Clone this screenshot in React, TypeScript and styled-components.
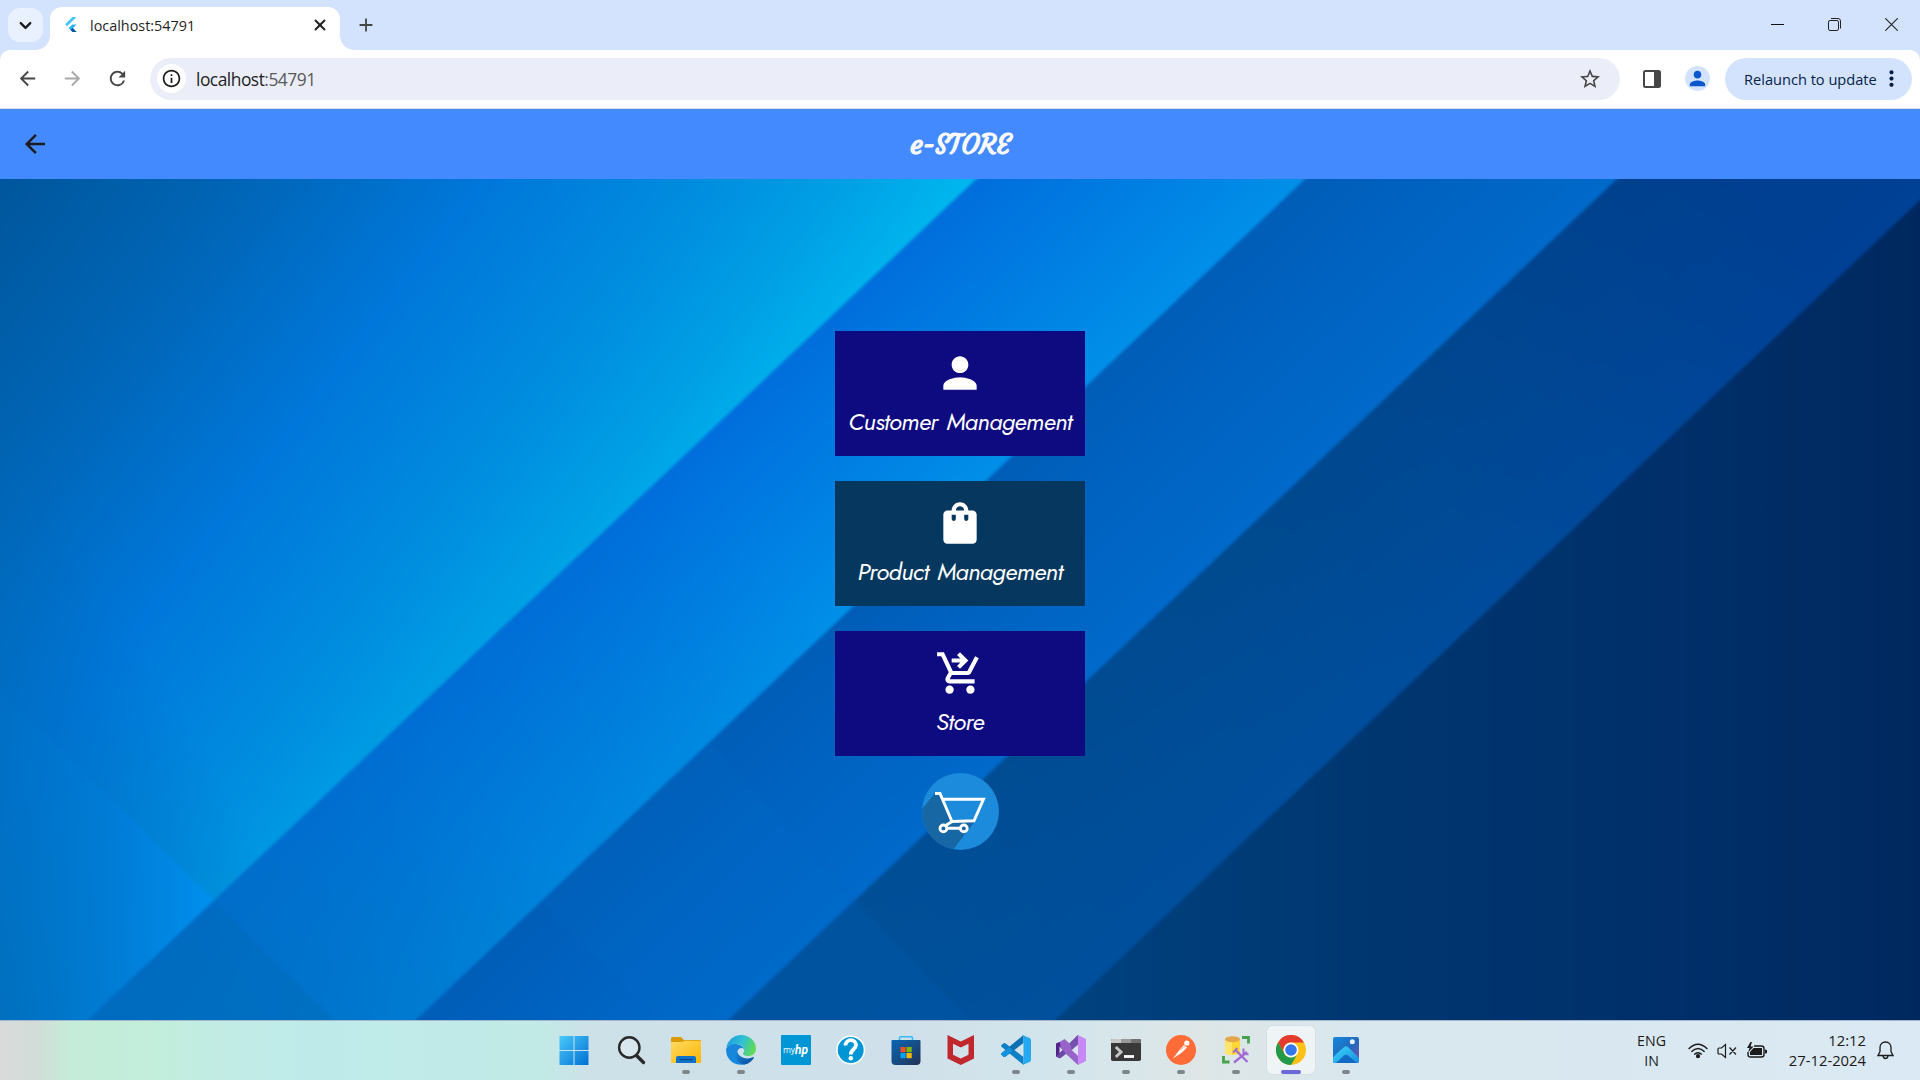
import React from "react";
import styled, { createGlobalStyle } from "styled-components";
import { ChevronDown, X } from "lucide-react";
import {
  MdArrowBack,
  MdArrowForward,
  MdRefresh,
  MdInfoOutline,
  MdStarBorder,
  MdPerson,
  MdShoppingBag,
  MdShoppingCartCheckout,
  MdAdd,
  MdMoreVert,
} from "react-icons/md";

const GlobalStyle = createGlobalStyle`
  * { box-sizing: border-box; }
  body { margin: 0; overflow: hidden; font-family: "Open Sans", "Noto Sans", sans-serif; }
  svg { display: block; flex: none; }
`;

const Screen = styled.div`
  display: grid;
  grid-template-rows: 50px 59px 70px 841px 60px;
  width: 1920px;
  height: 1080px;
  overflow: hidden;
`;

/* ---------- browser chrome ---------- */

const TabStrip = styled.header`
  display: flex;
  background: #d3e3fd;
  color: #1f1f1f;
`;

const TabSearch = styled.div`
  display: grid;
  place-items: center;
  width: 35px;
  height: 34px;
  margin: 8px 7px 0 8px;
  border-radius: 12px;
  background: #eaf1fe;
`;

const Tab = styled.div`
  position: relative;
  display: flex;
  align-items: center;
  width: 290px;
  height: 43px;
  margin-top: 7px;
  padding: 0 11px 7px 14px;
  border-radius: 12px 12px 0 0;
  background: #fff;

  &::before,
  &::after {
    content: "";
    position: absolute;
    bottom: 0;
    width: 14px;
    height: 14px;
  }
  &::before {
    left: -14px;
    background: radial-gradient(circle at 0 0, transparent 13.5px, #fff 14px);
  }
  &::after {
    right: -14px;
    background: radial-gradient(circle at 100% 0, transparent 13.5px, #fff 14px);
  }
`;

const TabTitle = styled.span`
  flex: 1;
  margin-left: 10px;
  padding-top: 1px;
  font-size: 14.4px;
  line-height: 20px;
`;

const NewTab = styled.div`
  margin: 14px 0 0 15px;
  color: #444746;
`;

const WindowButtons = styled.div`
  display: flex;
  gap: 44px;
  margin: 18px 22px 0 auto;
`;

const Toolbar = styled.div`
  background: #d3e3fd;
`;

const ToolbarInner = styled.div`
  display: flex;
  align-items: center;
  height: 59px;
  padding: 0 8px 1px 16px;
  border-radius: 10px 10px 0 0;
  border-bottom: 1px solid #dadce0;
  background: #fff;
  color: #474747;
`;

const NavIcons = styled.div`
  display: flex;
  gap: 22px;
  margin: 0 21px 0 0;
`;

const NavIcon = styled.span<{ $muted?: boolean }>`
  color: ${(p) => (p.$muted ? "#a9a9a9" : "#474747")};
`;

const AddressBar = styled.div`
  display: flex;
  align-items: center;
  width: 1470px;
  height: 42px;
  margin-right: 23px;
  padding: 0 18px 0 7px;
  border-radius: 21px;
  background: #ebeef8;
`;

const SiteInfo = styled.span`
  display: grid;
  place-items: center;
  width: 29px;
  height: 29px;
  border-radius: 50%;
  background: #fff;
  color: #1f1f1f;
`;

const Url = styled.span`
  flex: 1;
  margin-left: 10px;
  padding-top: 1px;
  color: #1f1f1f;
  font-size: 17.4px;
  letter-spacing: -0.5px;
  line-height: 24px;
`;

const Port = styled.span`
  color: #5a5a5a;
`;

const Avatar = styled.span`
  display: grid;
  place-items: center;
  width: 25px;
  height: 25px;
  margin: 0 15px 0 24px;
  border-radius: 50%;
  background: #d3e3fd;
  color: #0b57d0;
`;

const Relaunch = styled.div`
  display: flex;
  align-items: center;
  justify-content: space-between;
  width: 187px;
  height: 42px;
  padding: 0 8px 0 19px;
  border-radius: 21px;
  background: #d3e3fd;
  color: #041e49;
  font-size: 14.6px;
  font-weight: 500;
  white-space: nowrap;
`;

/* ---------- application ---------- */

const AppBar = styled.div`
  display: grid;
  grid-template-columns: 50px 1fr 50px;
  align-items: center;
  background: #448aff;
  color: #1d1b20;
`;

const BackButton = styled.div`
  padding-left: 20px;
`;

const AppTitle = styled.h1`
  margin: 0;
  padding-top: 1px;
  color: #fafafa;
  text-align: center;
  font: 700 28px/36px Courgette, Lato, sans-serif;
  letter-spacing: -0.25px;
`;

const Stage = styled.main`
  display: grid;
  overflow: hidden;

  & > * {
    grid-area: 1 / 1;
  }
`;

const Menu = styled.div`
  z-index: 1;
  display: flex;
  flex-direction: column;
  align-items: center;
  gap: 25px;
  padding-top: 152px;
`;

const MenuCard = styled.button<{ $tone: string }>`
  display: flex;
  flex-direction: column;
  align-items: center;
  width: 250px;
  height: 125px;
  padding: 17px 0 0;
  border: 0;
  background: ${(p) => p.$tone};
  color: #fff;
`;

const CardLabel = styled.span`
  margin-top: 8px;
  font: italic 400 24px/32px Jost, Lato, sans-serif;
  letter-spacing: -0.55px;
  word-spacing: 2px;
  white-space: nowrap;
`;

const CartBadge = styled.div`
  margin-top: -8px;
`;

/* ---------- taskbar ---------- */

const Taskbar = styled.footer`
  display: flex;
  justify-content: space-between;
  padding-left: 547px;
  border-top: 1px solid #a3b6cb;
  background: linear-gradient(
    90deg,
    #d9dbdb 0,
    #d2dcd8 35px,
    #c5ecd8 70px,
    #c2eedb 150px,
    #c1ebe6 240px,
    #beebea 310px,
    #c1eae6 540px,
    #cde1e8 590px,
    #cfe0ea 900px,
    #d4e6ec 1080px,
    #dee6e6 1200px,
    #d9e7ee 1350px,
    #dae9f3 1920px
  );
`;

const Apps = styled.div`
  display: flex;
`;

const AppSlot = styled.div<{ $active?: boolean }>`
  display: flex;
  flex-direction: column;
  align-items: center;
  width: 48px;
  height: 48px;
  margin: 5px 3.5px 0;
  padding-top: 9px;
  border-radius: 5px;
  background: ${(p) => (p.$active ? "rgba(255,255,255,.55)" : "transparent")};
  box-shadow: ${(p) => (p.$active ? "0 0 1px #9fb0bb" : "none")};

  &:first-child {
    margin-right: 5px;
    margin-left: 3px;
  }
`;

const Indicator = styled.span<{ $active?: boolean }>`
  width: ${(p) => (p.$active ? 20 : 8)}px;
  height: 4px;
  margin-top: 5px;
  border-radius: 2px;
  background: ${(p) => (p.$active ? "#6b69d6" : "#7d868a")};
`;

const Tray = styled.div`
  display: flex;
  align-items: center;
  padding-right: 26px;
  color: #1b1b1b;
  font-size: 14.2px;
  line-height: 20px;
`;

const Language = styled.div`
  margin-right: 22px;
  text-align: center;
`;

const Clock = styled.div`
  width: 84px;
  margin: -2px 11px 0 14px;
  font-size: 14.8px;
  text-align: right;
  white-space: nowrap;
`;

const TrayIcons = styled.div`
  display: flex;
  align-items: center;
  gap: 8px;
`;

/* ---------- drawings ---------- */

const Wallpaper = () => (
  <svg width="1920" height="841" viewBox="0 179 1920 841">
    <defs>
      <linearGradient id="w0" gradientUnits="userSpaceOnUse" x1="0" y1="179" x2="609" y2="649">
        <stop offset="0" stopColor="#00569c" />
        <stop offset=".25" stopColor="#0065b6" />
        <stop offset=".5" stopColor="#0077da" />
        <stop offset=".7" stopColor="#008ade" />
        <stop offset=".86" stopColor="#009ee4" />
        <stop offset="1" stopColor="#00b6ee" />
      </linearGradient>
      <linearGradient id="w0l" gradientUnits="userSpaceOnUse" x1="0" y1="1000" x2="260" y2="850">
        <stop offset="0" stopColor="#0068b4" stopOpacity=".8" />
        <stop offset="1" stopColor="#0068b4" stopOpacity="0" />
      </linearGradient>
      <linearGradient id="w0b" gradientUnits="userSpaceOnUse" x1="0" y1="0" x2="225" y2="0">
        <stop offset="0" stopColor="#0074c8" stopOpacity=".2" />
        <stop offset=".5" stopColor="#007cd8" stopOpacity=".75" />
        <stop offset="1" stopColor="#0092f2" stopOpacity=".95" />
      </linearGradient>
      <linearGradient id="w1" gradientUnits="userSpaceOnUse" x1="976" y1="179" x2="1131" y2="343">
        <stop offset="0" stopColor="#006edc" />
        <stop offset=".5" stopColor="#007ee2" />
        <stop offset="1" stopColor="#008fe8" />
      </linearGradient>
      <linearGradient id="w1d" gradientUnits="userSpaceOnUse" x1="720" y1="500" x2="180" y2="1010">
        <stop offset="0" stopColor="#0068b4" stopOpacity="0" />
        <stop offset=".5" stopColor="#006cc0" stopOpacity=".3" />
        <stop offset="1" stopColor="#006ec2" stopOpacity=".85" />
      </linearGradient>
      <linearGradient id="w2" gradientUnits="userSpaceOnUse" x1="1305" y1="179" x2="1452" y2="335">
        <stop offset="0" stopColor="#005db7" />
        <stop offset=".5" stopColor="#0063c2" />
        <stop offset="1" stopColor="#0069c9" />
      </linearGradient>
      <linearGradient id="w3" gradientUnits="userSpaceOnUse" x1="1617" y1="179" x2="1770" y2="341">
        <stop offset="0" stopColor="#004688" />
        <stop offset="1" stopColor="#004c9e" />
      </linearGradient>
      <linearGradient id="w3d" gradientUnits="userSpaceOnUse" x1="1750" y1="200" x2="850" y2="1000">
        <stop offset="0" stopColor="#003a90" stopOpacity=".65" />
        <stop offset=".5" stopColor="#004f9a" stopOpacity=".35" />
        <stop offset="1" stopColor="#00529c" stopOpacity=".75" />
      </linearGradient>
      <linearGradient id="w4" gradientUnits="userSpaceOnUse" x1="1080" y1="0" x2="1920" y2="0">
        <stop offset="0" stopColor="#00417e" />
        <stop offset=".35" stopColor="#003670" />
        <stop offset=".7" stopColor="#002f69" />
        <stop offset="1" stopColor="#00285f" />
      </linearGradient>
      <filter id="soft" filterUnits="userSpaceOnUse" x="-60" y="120" width="2040" height="960" colorInterpolationFilters="sRGB">
        <feGaussianBlur stdDeviation="1.4" />
      </filter>
    </defs>
    <g filter="url(#soft)">
      <rect x="-50" y="130" width="2020" height="940" fill="url(#w0)" />
      <rect x="-50" y="400" width="400" height="670" fill="url(#w0l)" />
      <path d="M-50 635L0 690L215 901L35 1070H-50Z" fill="url(#w0b)" />
      <path d="M1028 130L35 1070H1970V130Z" fill="url(#w1)" />
      <path d="M1028 130L35 1070H1970V130Z" fill="url(#w1d)" />
      <path d="M215 901L335 1020L390 1070H35Z" fill="#0066b0" opacity=".3" />
      <path d="M1357 130L363 1070H1970V130Z" fill="url(#w2)" />
      <path d="M710 742L855 898L673 1070H710L540 903Z" fill="#0074d0" opacity=".1" />
      <path d="M1669 130L676 1070H1970V130Z" fill="url(#w3)" />
      <path d="M1669 130L676 1070H1970V130Z" fill="url(#w3d)" />
      <path d="M855 898L970 1020L1010 1070H676Z" fill="#005cb0" opacity=".3" />
      <path d="M1994 130L1003 1070H1994Z" fill="url(#w4)" />
    </g>
  </svg>
);

const FlutterLogo = () => (
  <svg width="16" height="16" viewBox="0 0 16 16">
    <path d="M8.5 0H12.5L3.2 9.2L1.2 7.2Z" fill="#45c4f9" />
    <path d="M8.5 7.4H12.5L9 10.9L12.5 15H8.5L4.6 10.9Z" fill="#2ab2f4" />
    <path d="M6.6 12.8L8.6 10.9L12.5 15H8.5Z" fill="#06539e" />
  </svg>
);

const MinimizeIcon = () => (
  <svg width="13" height="13" viewBox="0 0 13 13">
    <path d="M0 6.5H13" stroke="#111" />
  </svg>
);
const RestoreIcon = () => (
  <svg width="13" height="13" viewBox="0 0 13 13" fill="none" stroke="#222">
    <rect x=".5" y="2.5" width="10" height="10" rx="1.6" />
    <path d="M3 .5H10Q12.5 .5 12.5 3V10.5" />
  </svg>
);
const CloseWindowIcon = () => (
  <svg width="13" height="13" viewBox="0 0 13 13">
    <path d="M.3 .3L12.7 12.7M12.7 .3L.3 12.7" stroke="#222" strokeWidth="1.1" />
  </svg>
);
const SidePanelIcon = () => (
  <svg width="18" height="18" viewBox="0 0 18 18">
    <rect x="1" y="1" width="16" height="16" rx="1.5" fill="#fff" stroke="#474747" strokeWidth="2" />
    <path d="M11 1H16.5V17H11Z" fill="#474747" />
  </svg>
);

const CartLogo = () => (
  <svg width="77" height="77" viewBox="0 0 77 77">
    <defs>
      <clipPath id="disc">
        <circle cx="38.5" cy="38.5" r="38.5" />
      </clipPath>
    </defs>
    <g clipPath="url(#disc)">
      <rect width="77" height="77" fill="#1c8bdb" />
      <path d="M13 20L18 20L30 49H52.5L30 78H-5V42Z" fill="#1767a5" />
    </g>
    <g fill="none" stroke="#fff" strokeWidth="2.9">
      <path d="M13 20.5H18L30 48.5L52 47.8L61.5 26.2H21" />
      <path d="M30 48.5L23 53M25 55.3H38" />
      <circle cx="21.4" cy="55.4" r="3.4" />
      <circle cx="41.8" cy="55.4" r="3.4" />
    </g>
  </svg>
);

const Glyph = ({ children }: { children: React.ReactNode }) => (
  <svg width="30" height="30" viewBox="0 0 30 30">
    {children}
  </svg>
);

const StartIcon = () => (
  <Glyph>
    <defs>
      <linearGradient id="win" gradientUnits="userSpaceOnUse" x1="0" y1="0" x2="30" y2="30">
        <stop offset="0" stopColor="#4ccbfb" />
        <stop offset="1" stopColor="#006fd3" />
      </linearGradient>
    </defs>
    <path d="M.5 1H14.5V15H.5ZM15.5 1H29.5V15H15.5ZM.5 16H14.5V30H.5ZM15.5 16H29.5V30H15.5Z" fill="url(#win)" />
  </Glyph>
);
const SearchGlyph = () => (
  <Glyph>
    <circle cx="13.3" cy="12.5" r="10.2" fill="rgba(255,255,255,.25)" stroke="#2a2a2a" strokeWidth="2.4" />
    <path d="M20.5 20.5L27.5 27.5" stroke="#2a2a2a" strokeWidth="3.4" strokeLinecap="round" />
  </Glyph>
);
const ExplorerIcon = () => (
  <Glyph>
    <defs>
      <linearGradient id="fold" x1="0" y1="0" x2="1" y2="1">
        <stop offset="0" stopColor="#ffda62" />
        <stop offset="1" stopColor="#fbb604" />
      </linearGradient>
    </defs>
    <path d="M0 3.5Q0 2 1.5 2H10L13 5H29Q30 5 30 6V12H0Z" fill="#dc9a04" />
    <path d="M0 7H11L13.5 5.8H30V27Q30 28 29 28H1Q0 28 0 27Z" fill="url(#fold)" />
    <path d="M5 28V23Q5 21 7 21H23Q25 21 25 23V28Z" fill="#0f72c8" />
    <path d="M8.5 24.6H21.5" stroke="#08478c" strokeWidth="1.2" />
  </Glyph>
);
const EdgeIcon = () => (
  <Glyph>
    <defs>
      <linearGradient id="edgeTop" x1="0" y1=".3" x2="1" y2=".6">
        <stop offset="0" stopColor="#1e9ede" />
        <stop offset=".5" stopColor="#2fc0d2" />
        <stop offset="1" stopColor="#63dc4c" />
      </linearGradient>
      <linearGradient id="edgeLow" x1="0" y1="0" x2="1" y2="1">
        <stop offset="0" stopColor="#1487da" />
        <stop offset="1" stopColor="#0c4a96" />
      </linearGradient>
    </defs>
    <path d="M.3 13C1.4 5.600 7.500 0 15 0C24 0 30 6.500 30 13.500C30 18.300 26.500 21 22.500 21C19 21 16.800 19.700 17 18.500C17.800 17.300 18.400 16.500 18.200 14.800C17.800 11.300 14.500 9 10.500 9C5.500 9 1.500 11 .3 13Z" fill="url(#edgeTop)" />
    <path d="M.2 13.500C2 10 6 8.500 10 9C14.500 9.500 18 12 18.200 15C17 11.800 11.800 12.500 11.200 17.500C10.600 23 16 28 19.500 29.300C9 32 -1 24.500 .2 13.500Z" fill="#1787dc" />
    <path d="M11.300 16.500C9 20 9.500 28 18.500 29.600C23 28.700 26.200 26 28 22.700C28.200 22 27.600 22 27 22.300C20.500 25 12.500 22.500 11.300 16.500Z" fill="url(#edgeLow)" />
  </Glyph>
);
const MyHpIcon = () => (
  <Glyph>
    <rect width="30" height="30" rx="1" fill="#0096d6" />
    <text x="2" y="17.500" fill="#fff" fontFamily="Open Sans" fontSize="8.500" textLength="12">my</text>
    <text x="14" y="19" fill="#fff" fontFamily="Roboto" fontSize="13" fontStyle="italic" fontWeight="700" textLength="13" lengthAdjust="spacingAndGlyphs">hp</text>
  </Glyph>
);
const HelpIcon = () => (
  <Glyph>
    <circle cx="14.700" cy="15" r="13.700" fill="#0096d6" stroke="#fff" strokeWidth="1.500" />
    <path d="M9.500 10.500C9.500 3.500 20 3.500 20 10C20 14.500 14.800 14 14.800 19.500" fill="none" stroke="#fff" strokeWidth="3.800" />
    <circle cx="14.800" cy="23.300" r="2.300" fill="#fff" />
  </Glyph>
);
const StoreIcon = () => (
  <Glyph>
    <defs>
      <linearGradient id="shop" x1="0" y1="0" x2="1" y2="1">
        <stop offset="0" stopColor="#0867b4" />
        <stop offset="1" stopColor="#243256" />
      </linearGradient>
    </defs>
    <path d="M8.500 7V2.800Q8.500 1.800 9.500 1.800H20.500Q21.500 1.800 21.500 2.800V7" fill="none" stroke="#35bdf4" strokeWidth="1.600" />
    <path d="M.5 6Q.5 5 1.500 5H28.500Q29.500 5 29.500 6V26Q29.500 30 25.500 30H4.500Q.5 30 .5 26Z" fill="url(#shop)" />
    <path d="M9.500 12H14.700V17.200H9.500Z" fill="#f25022" />
    <path d="M15.500 12H20.700V17.200H15.500Z" fill="#7fba00" />
    <path d="M9.500 18H14.700V23.200H9.500Z" fill="#00a4ef" />
    <path d="M15.500 18H20.700V23.200H15.500Z" fill="#ffb900" />
  </Glyph>
);
const ShieldIcon = () => (
  <Glyph>
    <path fillRule="evenodd" d="M1.500 0L14.800 6.500L28 0V23.500L14.800 30L1.500 23.500ZM7 8.700V19.700L14.800 23.500L22.500 19.700V8.700L14.800 12.500Z" fill="#c0282d" />
  </Glyph>
);
const CodeIcon = () => (
  <Glyph>
    <path d="M.4 10.200L2.500 8.200Q3.300 7.600 4.200 8.200L22.500 22V30L.5 11.700Q-.2 11 .4 10.200Z" fill="#0f80c8" />
    <path d="M.4 19.800L2.500 21.800Q3.300 22.400 4.200 21.800L22.500 8V0L.5 18.300Q-.2 19 .4 19.800Z" fill="#0a70b4" />
    <path d="M21.500 0L29 3.300Q30 3.800 30 5V25Q30 26.200 29 26.700L21.500 30Q22.500 29 22.500 27.500V2.500Q22.500 1 21.500 0Z" fill="#24a8f0" />
    <path d="M.4 19.800L2.500 21.800Q3.300 22.400 4.200 21.800L12 15.800L8.200 12L.5 18.300Q-.2 19 .4 19.800Z" fill="#1291dc" />
  </Glyph>
);
const StudioIcon = () => (
  <Glyph>
    <path d="M0 8.500L4 6.800L6.500 9V21L4 23.200L0 21.500Z" fill="#52218a" />
    <path d="M3.500 11.500L7 15L3.500 18.500Z" fill="#cfe0e8" />
    <path d="M4 23.200L0 21.500L22 0V8.500L8 20.500Z" fill="#6d48a6" />
    <path d="M4 6.800L8.500 4L13 8L27 25L22 30L9.500 18.500L4.500 12Z" fill="#9765c8" />
    <path d="M22 0L30 4V26L22 30V21.500L15.500 15L22 9Z" fill="#c78af5" />
    <path d="M22 9.500V20.500L16 15Z" fill="#d8e6ec" />
    <path d="M22 9.500V0L14.500 7.500L15.500 15Z" fill="#7650ae" />
  </Glyph>
);
const TerminalIcon = () => (
  <Glyph>
    <rect y="4" width="30" height="22" rx="1.800" fill="#383838" />
    <path d="M0 8V5.800Q0 4 1.800 4H10V8Z" fill="#c8c8c8" />
    <path d="M10 4H20V8H10Z" fill="#999" />
    <path d="M20 4H28.200Q30 4 30 5.800V8H20Z" fill="#707070" />
    <path d="M4.800 12L10 17L4.800 22" fill="none" stroke="#c4c4c4" strokeWidth="3" />
    <path d="M13 21.500H23" stroke="#fff" strokeWidth="2.800" />
  </Glyph>
);
const PostmanIcon = () => (
  <Glyph>
    <circle cx="15" cy="15" r="15" fill="#ff6c37" />
    <path d="M7 23.500L13 15.500L18 10L21 12.500L16 17.500Z" fill="#fff" />
    <circle cx="20.800" cy="8" r="2.600" fill="#fff" />
    <path d="M14 15L20 11" stroke="#f3a488" strokeWidth=".7" />
  </Glyph>
);
const DatabaseIcon = () => (
  <Glyph>
    <path d="M4 4V18Q11 22 19 18V4Z" fill="#fdd835" />
    <path d="M4 4V18Q7 20 11 20V4Z" fill="#ffe568" />
    <ellipse cx="11.500" cy="4.200" rx="7.500" ry="3" fill="#e2a64c" />
    <path d="M21 2.500H27.500V8.500M2.500 21V27H8.500" fill="none" stroke="#46a34b" strokeWidth="2.800" />
    <path d="M14 14.500L26.500 27M26 17L13 27.500" stroke="#a36ad4" strokeWidth="2.300" />
    <path d="M12 17.500L16.500 13M22.500 13.500V18.500L27.500 19.500" fill="none" stroke="#a36ad4" strokeWidth="2" />
  </Glyph>
);
const ChromeIcon = () => (
  <Glyph>
    <circle cx="15" cy="15" r="15" fill="#fbc116" />
    <path d="M2 7.500A15 15 0 0 1 28 7.500H15A7.500 7.500 0 0 0 8.500 18.800Z" fill="#e33b2e" />
    <path d="M2 7.500A15 15 0 0 0 15 30L21.500 18.750A7.500 7.500 0 0 1 8.500 18.750Z" fill="#229a48" />
    <circle cx="15" cy="15" r="7.500" fill="#fff" />
    <circle cx="15" cy="15" r="5.800" fill="#3478ee" />
  </Glyph>
);
const PhotosIcon = () => (
  <Glyph>
    <defs>
      <linearGradient id="sky" x1="0" y1="0" x2="1" y2="1">
        <stop offset="0" stopColor="#1289dc" />
        <stop offset=".55" stopColor="#2467bd" />
        <stop offset="1" stopColor="#8552ae" />
      </linearGradient>
      <linearGradient id="hill" x1="0" y1="0" x2="1" y2="1">
        <stop offset="0" stopColor="#3bd8fb" />
        <stop offset="1" stopColor="#1688dc" />
      </linearGradient>
      <clipPath id="photoClip">
        <rect x="2" y="2" width="26" height="26" rx="2" />
      </clipPath>
    </defs>
    <g clipPath="url(#photoClip)">
      <rect x="2" y="2" width="26" height="26" fill="url(#sky)" />
      <path d="M0 24L13 12Q15 10.500 17 12L30 25V30H0Z" fill="url(#hill)" />
      <path d="M5 28L13 20.500Q15 19 17 20.500L26 28Z" fill="#126bc4" />
    </g>
    <circle cx="21.300" cy="6.700" r="2.500" fill="#e8f0fa" />
  </Glyph>
);

const WifiIcon = () => (
  <svg width="20" height="16" viewBox="0 0 20 16" fill="none" stroke="#1b1b1b" strokeWidth="1.400">
    <path d="M.6 6Q10 -3.500 19.400 6M3.400 8.800Q10 2.200 16.600 8.800M6.200 11.500Q10 7.800 13.800 11.500" />
    <circle cx="10" cy="13.200" r="1.400" fill="#1b1b1b" />
  </svg>
);
const MutedIcon = () => (
  <svg width="22" height="16" viewBox="0 0 22 16" fill="none" stroke="#1b1b1b" strokeWidth="1.200">
    <path d="M3 5H5.500L9.500 1.500V14.500L5.500 11H3Q2 11 2 10V6Q2 5 3 5ZM13.500 4.500L20 11.500M20 4.500L13.500 11.500" />
  </svg>
);
const BatteryIcon = () => (
  <svg width="22" height="18" viewBox="0 0 22 18">
    <path d="M8 4H15.500Q18 4 18 6.500V12.500Q18 15 15.500 15H4.500Q2 15 2 12.500V10" fill="none" stroke="#1b1b1b" strokeWidth="1.400" />
    <path d="M7.500 6H16V13H4V10Z" fill="#1b1b1b" />
    <path d="M19 7.500Q21.500 7.500 21 9.500Q21.500 11.500 19 11.500Z" fill="#1b1b1b" />
    <path d="M4.500 0L1 6H3.500L2 10.500L7.500 4.500H4.500L6 0Z" fill="#1b1b1b" />
  </svg>
);
const BellIcon = () => (
  <svg width="17" height="19" viewBox="0 0 17 19" fill="none" stroke="#1b1b1b" strokeWidth="1.300">
    <path d="M8.500 1C5 1 3 3.500 3 6.500V10.500L1 14.500H16L14 10.500V6.500C14 3.500 12 1 8.500 1ZM6 15Q6.500 17.500 8.500 17.500T11 15" />
  </svg>
);

const taskbarApps: { name: string; icon: React.ReactNode; running?: boolean; active?: boolean }[] = [
  { name: "start", icon: <StartIcon /> },
  { name: "search", icon: <SearchGlyph /> },
  { name: "explorer", icon: <ExplorerIcon />, running: true },
  { name: "edge", icon: <EdgeIcon />, running: true },
  { name: "myhp", icon: <MyHpIcon /> },
  { name: "help", icon: <HelpIcon /> },
  { name: "store", icon: <StoreIcon /> },
  { name: "shield", icon: <ShieldIcon /> },
  { name: "code", icon: <CodeIcon />, running: true },
  { name: "studio", icon: <StudioIcon />, running: true },
  { name: "terminal", icon: <TerminalIcon />, running: true },
  { name: "postman", icon: <PostmanIcon />, running: true },
  { name: "database", icon: <DatabaseIcon />, running: true },
  { name: "chrome", icon: <ChromeIcon />, running: true, active: true },
  { name: "photos", icon: <PhotosIcon />, running: true },
];

const menuItems = [
  { label: "Customer Management", icon: <MdPerson size={50} />, tone: "#0e0a80" },
  { label: "Product Management", icon: <MdShoppingBag size={50} />, tone: "#06385f" },
  { label: "Store", icon: <MdShoppingCartCheckout size={50} />, tone: "#0e0a80" },
];

export default function App() {
  return (
    <>
      <GlobalStyle />
      <Screen>
        <TabStrip>
          <TabSearch>
            <ChevronDown size={19} strokeWidth={3} />
          </TabSearch>
          <Tab>
            <FlutterLogo />
            <TabTitle>localhost:54791</TabTitle>
            <X size={18} strokeWidth={2.6} />
          </Tab>
          <NewTab>
            <MdAdd size={22} />
          </NewTab>
          <WindowButtons>
            <MinimizeIcon />
            <RestoreIcon />
            <CloseWindowIcon />
          </WindowButtons>
        </TabStrip>

        <Toolbar>
          <ToolbarInner>
            <NavIcons>
              <NavIcon><MdArrowBack size={23} /></NavIcon>
              <NavIcon $muted><MdArrowForward size={23} /></NavIcon>
              <NavIcon><MdRefresh size={23} /></NavIcon>
            </NavIcons>
            <AddressBar>
              <SiteInfo><MdInfoOutline size={21} /></SiteInfo>
              <Url>localhost<Port>:54791</Port></Url>
              <MdStarBorder size={24} />
            </AddressBar>
            <SidePanelIcon />
            <Avatar><MdPerson size={23} /></Avatar>
            <Relaunch>
              Relaunch to update
              <MdMoreVert size={25} />
            </Relaunch>
          </ToolbarInner>
        </Toolbar>

        <AppBar>
          <BackButton><MdArrowBack size={30} /></BackButton>
          <AppTitle>e-STORE</AppTitle>
        </AppBar>

        <Stage>
          <Wallpaper />
          <Menu>
            {menuItems.map((item) => (
              <MenuCard key={item.label} $tone={item.tone}>
                {item.icon}
                <CardLabel>{item.label}</CardLabel>
              </MenuCard>
            ))}
            <CartBadge><CartLogo /></CartBadge>
          </Menu>
        </Stage>

        <Taskbar>
          <Apps>
            {taskbarApps.map((app) => (
              <AppSlot key={app.name} $active={app.active}>
                {app.icon}
                {app.running && <Indicator $active={app.active} />}
              </AppSlot>
            ))}
          </Apps>
          <Tray>
            <Language>ENG<br />IN</Language>
            <TrayIcons>
              <WifiIcon />
              <MutedIcon />
              <BatteryIcon />
            </TrayIcons>
            <Clock>12:12<br />27-12-2024</Clock>
            <BellIcon />
          </Tray>
        </Taskbar>
      </Screen>
    </>
  );
}
